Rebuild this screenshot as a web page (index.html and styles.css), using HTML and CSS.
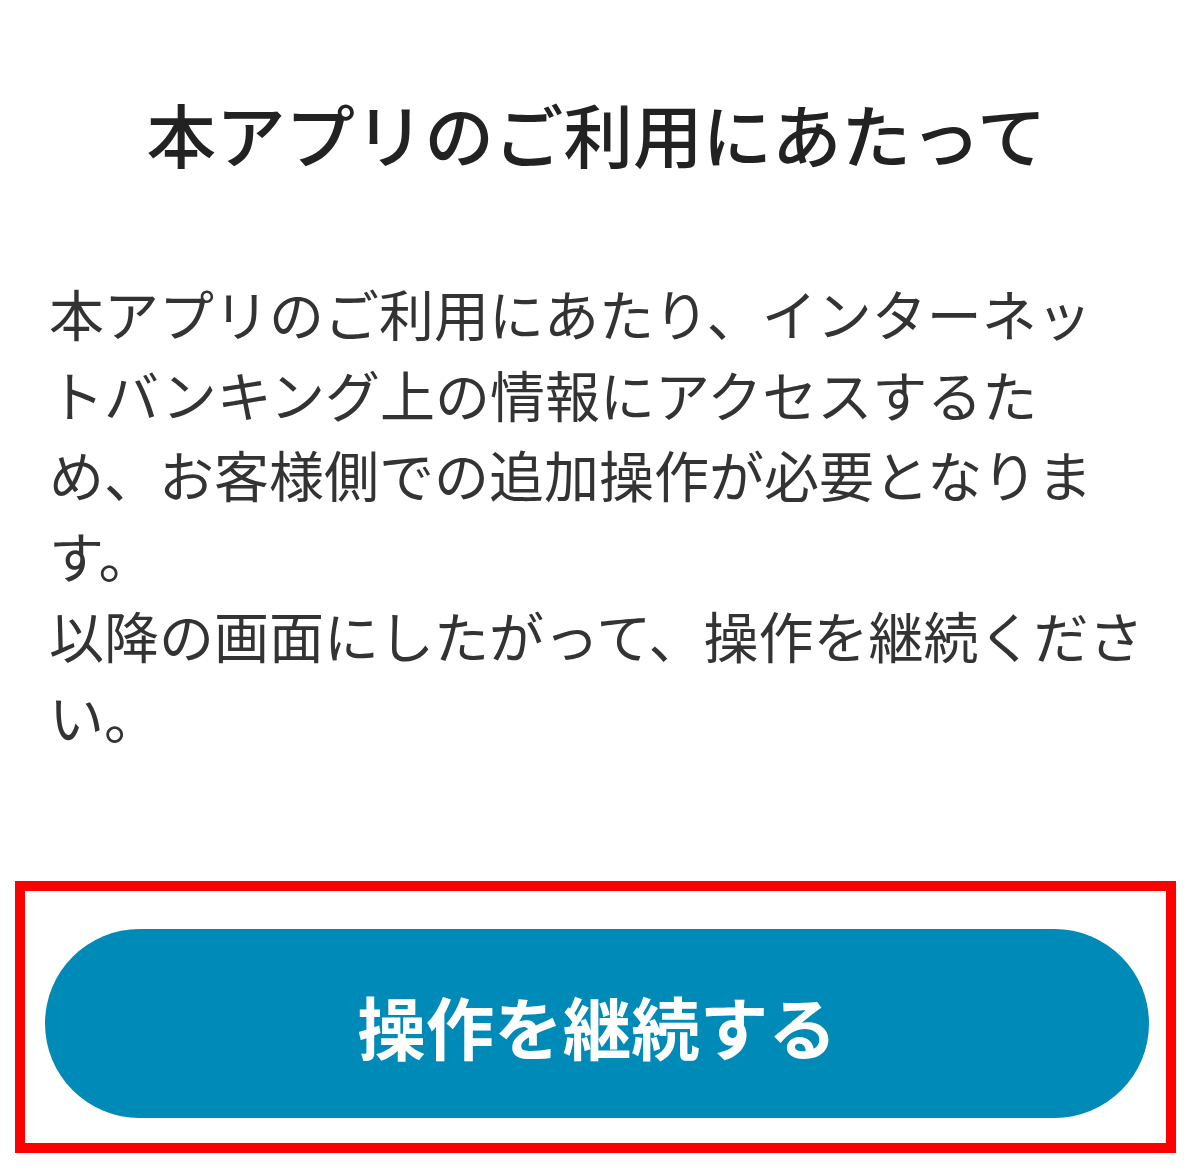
FILE: index.html
```html
<!DOCTYPE html>
<html lang="ja">

<head>
    <meta charset="UTF-8">
    <meta name="viewport" content="width=device-width, initial-scale=1.0">
    <title>本アプリのご利用にあたって</title>

    <link rel="stylesheet" href="styles.css">
</head>

<body>

    <main class="screen">
        <h1 class="title">本アプリのご利用にあたって</h1>

        <p class="notice">
            本アプリのご利用にあたり、インターネッ<br>トバンキング上の情報にアクセスするた<br>め、お客様側での追加操作が必要となりま<br>す。<br>以降の画面にしたがって、操作を継続くださ<br>い。
        </p>

        <div class="action-area">
            <button type="button" class="btn-continue">操作を継続する</button>
        </div>
    </main>

</body>

</html>
```

FILE: styles.css
```css
body {
    margin: 0;
    padding: 0;
    background: #fff;
    font-family: "Noto Sans CJK JP", "Noto Sans", sans-serif;
    color: #333;
}

.screen {
    display: flex;
    flex-direction: column;
    padding-top: 81px;
}

/* Heading at the top of the screen */
.title {
    margin: 0;
    font-size: 69.5px;
    line-height: 104px;
    font-weight: 500;
    text-align: center;
    color: #222;
}

/* Explanation text, broken the same way as on the device */
.notice {
    margin: 87px 0 0;
    padding: 0 40px 0 49px;
    font-size: 55px;
    line-height: 80.5px;
    font-weight: 400;
    color: #333;
    white-space: nowrap;
}

/* Highlighted box round the button */
.action-area {
    margin: 126px 17px 0 15px;
    padding: 38px 17px 25px 20px;
    border: 10px solid #ff0000;
}

.btn-continue {
    display: flex;
    align-items: center;
    justify-content: center;
    width: 100%;
    height: 189px;
    padding: 6px 0 0;
    border: none;
    border-radius: 95px;
    background-color: #008ab8;
    color: #fff;
    font-family: "Noto Sans CJK JP", "Noto Sans", sans-serif;
    font-size: 68.5px;
    font-weight: 700;
    line-height: 1;
    cursor: pointer;
}
```
